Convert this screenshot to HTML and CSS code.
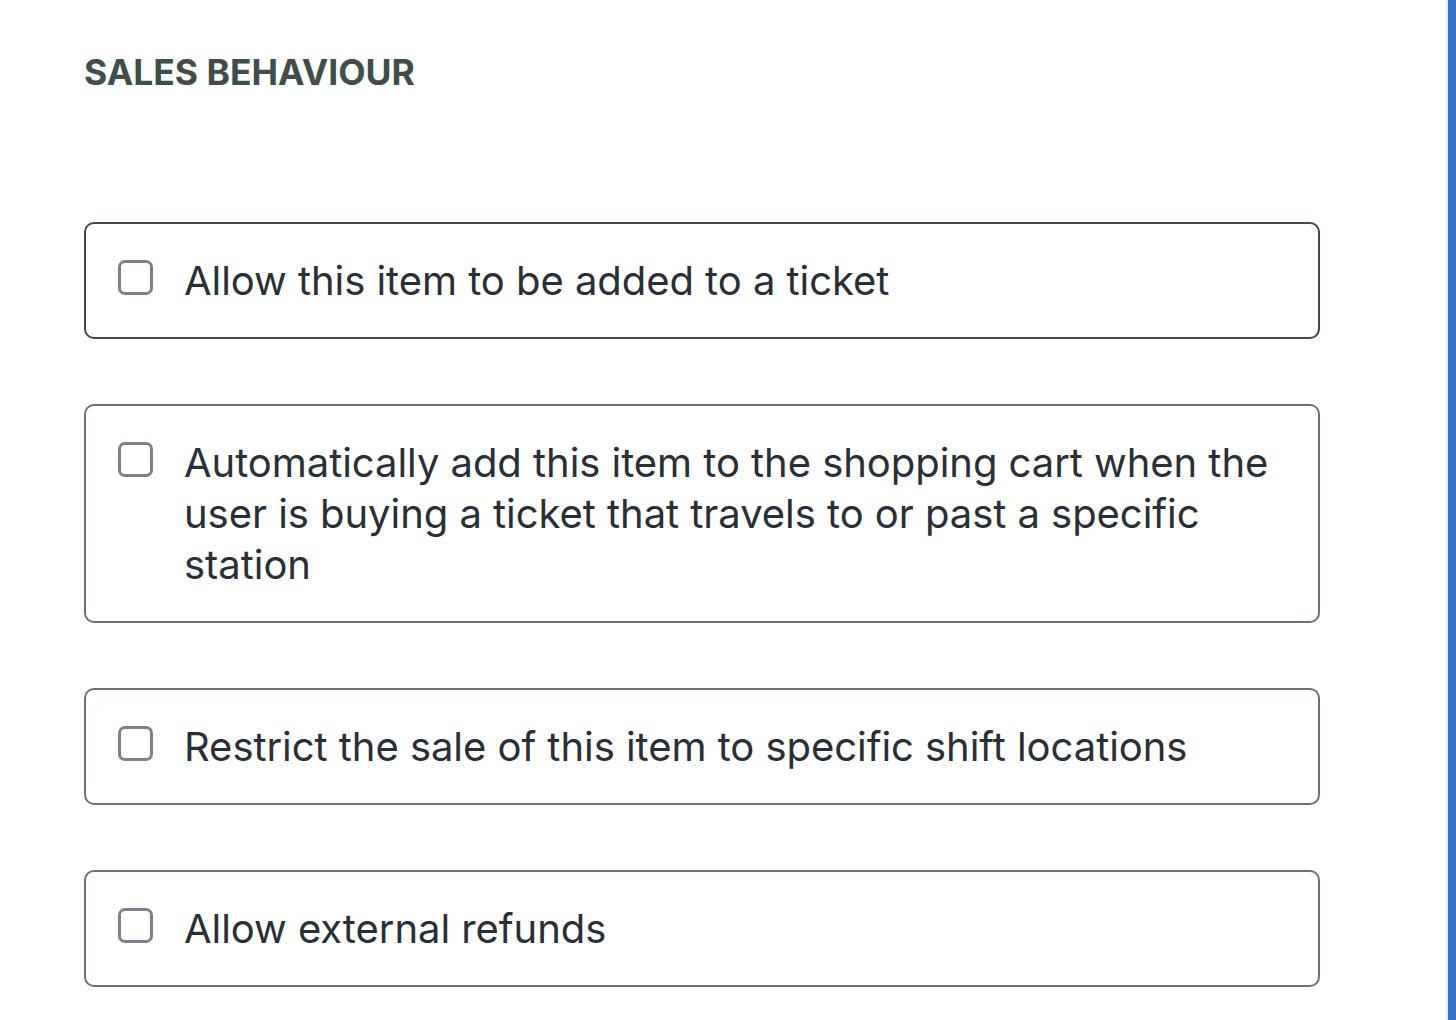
FILE: index.html
```html
<!DOCTYPE html>
<html lang="en">
<head>
    <meta charset="UTF-8">
    <meta name="viewport" content="width=device-width, initial-scale=1.0">
    <title>Sales behaviour</title>
    <link rel="stylesheet" href="styles.css">
</head>
<body>

    <div class="page">
        <main class="content">
            <h2 class="section-title">SALES BEHAVIOUR</h2>

            <div class="option-list">
                <label class="option option-active">
                    <input type="checkbox" class="option-check">
                    <span class="option-text">Allow this item to be added to a ticket</span>
                </label>

                <label class="option">
                    <input type="checkbox" class="option-check">
                    <span class="option-text">Automatically add this item to the shopping cart when the user is buying a ticket that travels to or past a specific station</span>
                </label>

                <label class="option">
                    <input type="checkbox" class="option-check">
                    <span class="option-text">Restrict the sale of this item to specific shift locations</span>
                </label>

                <label class="option">
                    <input type="checkbox" class="option-check">
                    <span class="option-text">Allow external refunds</span>
                </label>
            </div>
        </main>

        <div class="side-strip"></div>
    </div>

</body>
</html>
```

FILE: styles.css
```css
body {
    font-family: Inter, 'Noto Sans', sans-serif;
    margin: 0;
    padding: 0;
    background-color: #fff;
}

.page {
    display: flex;
    min-height: 1020px;
}

.content {
    flex: 1;
    padding: 0 0 0 84px;
}

.section-title {
    margin: 0;
    padding-top: 52px;
    font-size: 35.5px;
    line-height: 42px;
    font-weight: 700;
    color: #3f4e4b;
}

.option-list {
    display: flex;
    flex-direction: column;
    gap: 65px;
    width: 1236px;
    margin-top: 128px;
}

.option {
    display: flex;
    align-items: flex-start;
    gap: 31px;
    padding: 31px 32px;
    border: 2px solid #6b717b;
    border-radius: 10px;
    cursor: pointer;
}

.option-active {
    border-color: #3f4b4a; /* last clicked card */
}

.option-check {
    appearance: none;
    -webkit-appearance: none;
    flex-shrink: 0;
    width: 35px;
    height: 35px;
    margin: 5px 0 0 0;
    border: 3px solid #7a828f;
    border-radius: 7px;
    background-color: #fff;
    box-sizing: border-box;
}

.option-text {
    font-size: 40px;
    line-height: 51px;
    letter-spacing: -0.05px;
    color: #2a2f37;
}

.side-strip {
    width: 8px;
    flex-shrink: 0;
    background-color: #3a72c5;
    border-left: 2px solid #e9e9ee;
}
```
